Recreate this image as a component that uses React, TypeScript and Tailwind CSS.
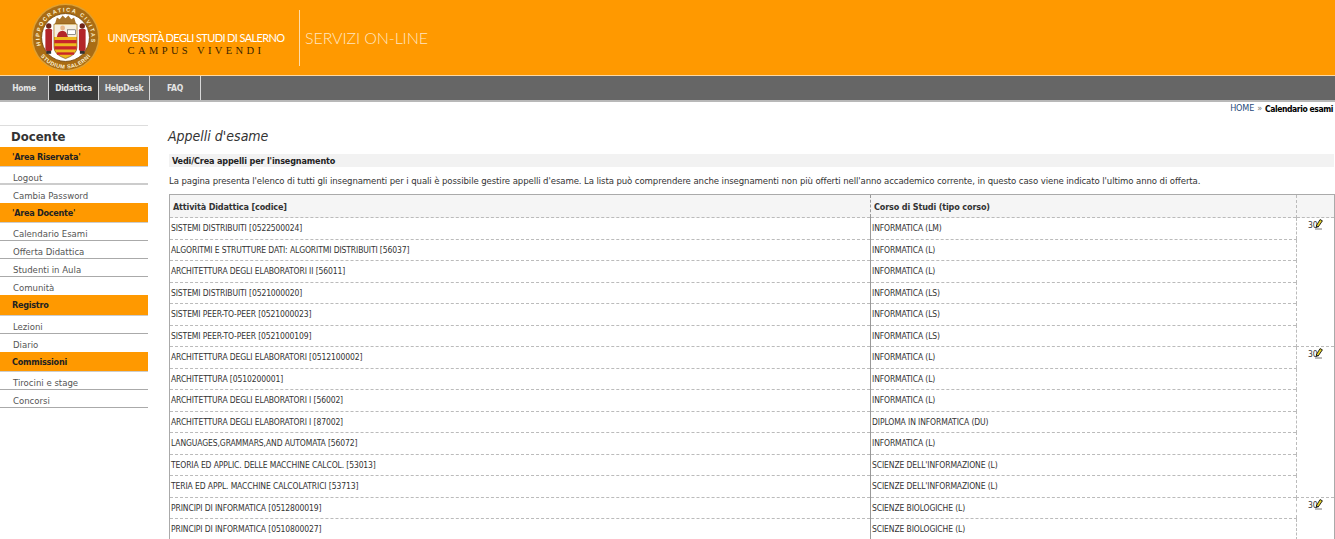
import React from 'react'

const font = "font-['DejaVu_Sans_Condensed','DejaVu_Sans',sans-serif]"

const navItems = [
  { label: 'Home', active: false, w: 'w-[49px]' },
  { label: 'Didattica', active: true, w: 'w-[50px]' },
  { label: 'HelpDesk', active: false, w: 'w-[51px]' },
  { label: 'FAQ', active: false, w: 'w-[51px]' },
]

const sideMenu = [
  { title: "'Area Riservata'", links: ['Logout', 'Cambia Password'] },
  { title: "'Area Docente'", links: ['Calendario Esami', 'Offerta Didattica', 'Studenti in Aula', 'Comunità'] },
  { title: 'Registro', links: ['Lezioni', 'Diario'] },
  { title: 'Commissioni', links: ['Tirocini e stage', 'Concorsi'] },
]

const groups = [
  [
    ['SISTEMI DISTRIBUITI [0522500024]', 'INFORMATICA (LM)'],
    ['ALGORITMI E STRUTTURE DATI: ALGORITMI DISTRIBUITI [56037]', 'INFORMATICA (L)'],
    ['ARCHITETTURA DEGLI ELABORATORI II [56011]', 'INFORMATICA (L)'],
    ['SISTEMI DISTRIBUITI [0521000020]', 'INFORMATICA (LS)'],
    ['SISTEMI PEER-TO-PEER [0521000023]', 'INFORMATICA (LS)'],
    ['SISTEMI PEER-TO-PEER [0521000109]', 'INFORMATICA (LS)'],
  ],
  [
    ['ARCHITETTURA DEGLI ELABORATORI [0512100002]', 'INFORMATICA (L)'],
    ['ARCHITETTURA [0510200001]', 'INFORMATICA (L)'],
    ['ARCHITETTURA DEGLI ELABORATORI I [56002]', 'INFORMATICA (L)'],
    ['ARCHITETTURA DEGLI ELABORATORI I [87002]', 'DIPLOMA IN INFORMATICA (DU)'],
    ['LANGUAGES,GRAMMARS,AND AUTOMATA [56072]', 'INFORMATICA (L)'],
    ['TEORIA ED APPLIC. DELLE MACCHINE CALCOL. [53013]', "SCIENZE DELL'INFORMAZIONE (L)"],
    ['TERIA ED APPL. MACCHINE CALCOLATRICI [53713]', "SCIENZE DELL'INFORMAZIONE (L)"],
  ],
  [
    ['PRINCIPI DI INFORMATICA [0512800019]', 'SCIENZE BIOLOGICHE (L)'],
    ['PRINCIPI DI INFORMATICA [0510800027]', 'SCIENZE BIOLOGICHE (L)'],
  ],
]

const Seal = () => (
  <svg width="69" height="69" viewBox="0 0 72 72" className="shrink-0">
    <circle cx="36" cy="36" r="35.5" fill="#e0a030" />
    <circle cx="36" cy="36" r="34" fill="#a96c14" />
    <circle cx="36" cy="36" r="25" fill="#fff" stroke="#7a4d10" strokeWidth="1" />
    <defs>
      <path id="sealTop" d="M 10.3 44.3 A 27 27 0 1 1 61.7 44.3" />
      <path id="sealBottom" d="M 9.4 54.6 A 32.5 32.5 0 0 0 62.6 54.6" />
    </defs>
    <text fontSize="5.8" fontWeight="700" fill="#fff3d0" fontFamily="'Liberation Sans', sans-serif">
      <textPath href="#sealTop" textLength="98">HIPPOCRATICA CIVITAS</textPath>
    </text>
    <text fontSize="5.8" fontWeight="700" fill="#fff3d0" fontFamily="'Liberation Sans', sans-serif">
      <textPath href="#sealBottom" textLength="60" startOffset="1">STUDIUM SALERNI</textPath>
    </text>
    {/* side figures */}
    <rect x="15" y="27" width="7" height="23" rx="1.5" fill="#b3262a" />
    <circle cx="18.5" cy="24" r="2.8" fill="#6e2418" />
    <rect x="50" y="27" width="7" height="23" rx="1.5" fill="#b3262a" />
    <circle cx="53.5" cy="24" r="2.8" fill="#6e2418" />
    <rect x="16" y="50" width="5" height="3" fill="#333" />
    <rect x="51" y="50" width="5" height="3" fill="#333" />
    {/* crown */}
    <path d="M25 22 l2-7 3 2 3-4 3 3 3-3 3 4 3-2 2 7z" fill="#a8742a" />
    {/* shield */}
    <path d="M24 22 H48 V46 Q48 54 36 58 Q24 54 24 46 Z" fill="#eeb91e" stroke="#7a4d10" strokeWidth="0.7" />
    <rect x="24.4" y="22.4" width="23.2" height="13" fill="#f6efe0" />
    <circle cx="33" cy="26" r="2.5" fill="#e9b98c" />
    <path d="M27 35.4 Q28 29 33 29 Q37 29 38.5 35.4 Z" fill="#b3262a" />
    <rect x="38" y="28" width="8.5" height="5" fill="#fff" stroke="#444" strokeWidth="0.6" />
    <path d="M24.4 38.5 H47.6 V42 H24.4 Z M24.4 45 H47.6 V48.5 H24.4 Z" fill="#c8262a" />
    <path d="M27 51.5 H45 V54 H27 Z" fill="#c8262a" />
  </svg>
)

const Pencil = () => (
  <svg width="8" height="11" viewBox="0 0 8 11" className="absolute left-[7px] top-[-1px]">
    <path d="M5 0.6 L7.4 1.8 L3.2 8 L1.2 7 Z" fill="#e8d428" stroke="#111" strokeWidth="0.9" />
    <path d="M1.2 7 L3.2 8 L0.9 9 Z" fill="#111" />
    <path d="M0 10 H7" stroke="#777" strokeWidth="1" />
  </svg>
)

export default function App() {
  return (
    <div className={`w-[1335px] h-[539px] overflow-hidden bg-white text-[#333] ${font}`}>
      <header className="h-[76px] bg-[#ff9900] border-b border-[#ffd9a0] flex items-center pl-[31px]">
        <Seal />
        <div className="ml-[7px] w-[178px] flex flex-col items-center pt-[13px]">
          <span className="font-['Lato',sans-serif] text-[11px] leading-[13px] text-white tracking-[-0.62px] whitespace-nowrap">
            UNIVERSITÀ DEGLI STUDI DI SALERNO
          </span>
          <span className="font-['Liberation_Serif',serif] text-[10.5px] leading-[13px] text-[#3a2400] tracking-[3.4px] whitespace-nowrap">
            CAMPUS VIVENDI
          </span>
        </div>
        <div className="ml-[14px] w-px h-[56px] bg-[#ffdca8]" />
        <span className="ml-[5px] font-['Lato',sans-serif] text-[16px] font-light text-[#ffe6c0] tracking-[-0.1px] whitespace-nowrap">
          SERVIZI ON-LINE
        </span>
      </header>

      <nav className="h-[26px] bg-[#666666] border-b-2 border-[#b8b8b8] flex">
        {navItems.map((item) => (
          <a
            key={item.label}
            className={`${item.w} h-full flex items-center justify-center pt-px border-r border-[#d8d8d8] text-[8.5px] font-bold tracking-[-0.3px] text-[#e4e4e4] ${item.active ? 'bg-[#3d3d3d]' : ''}`}
          >
            {item.label}
          </a>
        ))}
      </nav>

      <div className="h-[14px] flex justify-end items-center text-[9px] tracking-[-0.15px] pr-[2px] text-[#222]">
        <span className="text-[#1f4a7a]">HOME</span>
        <span className="mx-[3px] text-[#777]">»</span>
        <span className="font-bold text-black text-[8.5px] tracking-[-0.4px]">Calendario esami</span>
      </div>

      <div className="flex">
        <aside className="w-[148px] shrink-0 mt-[9px]">
          <div className="h-[22px] border-t border-[#dddddd] pl-[11px] text-[13px] leading-[21px] font-semibold text-[#333]">
            Docente
          </div>
          {sideMenu.map((section) => (
            <div key={section.title}>
              <div className={`${section.title === 'Registro' ? 'h-[21px]' : 'h-[20px]'} bg-[#ff9900] border-b border-[#cccccc] pl-[12px] text-[9px] tracking-[-0.25px] leading-[20px] font-bold text-[#222]`}>
                {section.title}
              </div>
              {section.links.map((link, i) => (
                <div
                  key={link}
                  className={`h-[18px] pl-[13px] pt-px text-[9.5px] leading-[20px] text-[#555] ${i < section.links.length - 1 || section.title === 'Commissioni' ? 'border-b border-[#aaaaaa]' : ''} ${link === 'Logout' ? 'border-b-2 border-[#cccccc]' : ''}`}
                >
                  {link}
                </div>
              ))}
            </div>
          ))}
        </aside>

        <main className="ml-[21px] w-[1165px] pt-[10px]">
          <h1 className="text-[14px] leading-[20px] italic text-[#333] -ml-[1px]">Appelli d'esame</h1>
          <h2 className="mt-[8px] h-[13px] bg-[#f2f2f2] pl-[3px] text-[9px] tracking-[-0.15px] leading-[14px] font-bold text-[#222]">
            Vedi/Crea appelli per l'insegnamento
          </h2>
          <p className="mt-[7px] text-[9.5px] tracking-[-0.09px] leading-[13px] text-[#333] whitespace-nowrap">
            La pagina presenta l'elenco di tutti gli insegnamenti per i quali è possibile gestire appelli d'esame. La lista può comprendere anche insegnamenti non più offerti nell'anno accademico corrente, in questo caso viene indicato l'ultimo anno di offerta.
          </p>

          <table className="mt-[7px] w-[1165px] table-fixed border-collapse border border-[#aaaaaa] text-[8.5px] tracking-[-0.12px]">
            <colgroup>
              <col className="w-[701px]" />
              <col className="w-[426px]" />
              <col className="w-[38px]" />
            </colgroup>
            <thead>
              <tr className="h-[23px] bg-[#f5f5f5] border-b border-dashed border-[#bbbbbb]">
                <th className="pl-[3px] pt-[3px] text-left text-[9px] tracking-[-0.15px] font-bold text-[#333]">Attività Didattica [codice]</th>
                <th className="pl-[3px] pt-[3px] text-left text-[9px] tracking-[-0.15px] font-bold text-[#333] border-l border-dashed border-[#999999]">Corso di Studi (tipo corso)</th>
                <th className="border-l border-dashed border-[#bbbbbb]" />
              </tr>
            </thead>
            <tbody>
              {groups.map((rows, g) =>
                rows.map((row, r) => (
                  <tr key={`${g}-${r}`} className="h-[21.5px]">
                    <td className="pl-[1px] pt-px text-[#333] border-b border-dashed border-[#bbbbbb] whitespace-nowrap">{row[0]}</td>
                    <td className="pl-[1px] pt-px text-[#333] border-b border-dashed border-[#bbbbbb] border-l border-l-[#999999] whitespace-nowrap" style={{ borderLeftStyle: 'solid' }}>{row[1]}</td>
                    {r === 0 && (
                      <td rowSpan={rows.length} className="align-top border-l border-b border-dashed border-[#bbbbbb] pl-[11px] pt-[1px] text-[#333]">
                        <span className="relative inline-block w-[14px] leading-[11px]">
                          30
                          <Pencil />
                        </span>
                      </td>
                    )}
                  </tr>
                )),
              )}
            </tbody>
          </table>
        </main>
      </div>
    </div>
  )
}
